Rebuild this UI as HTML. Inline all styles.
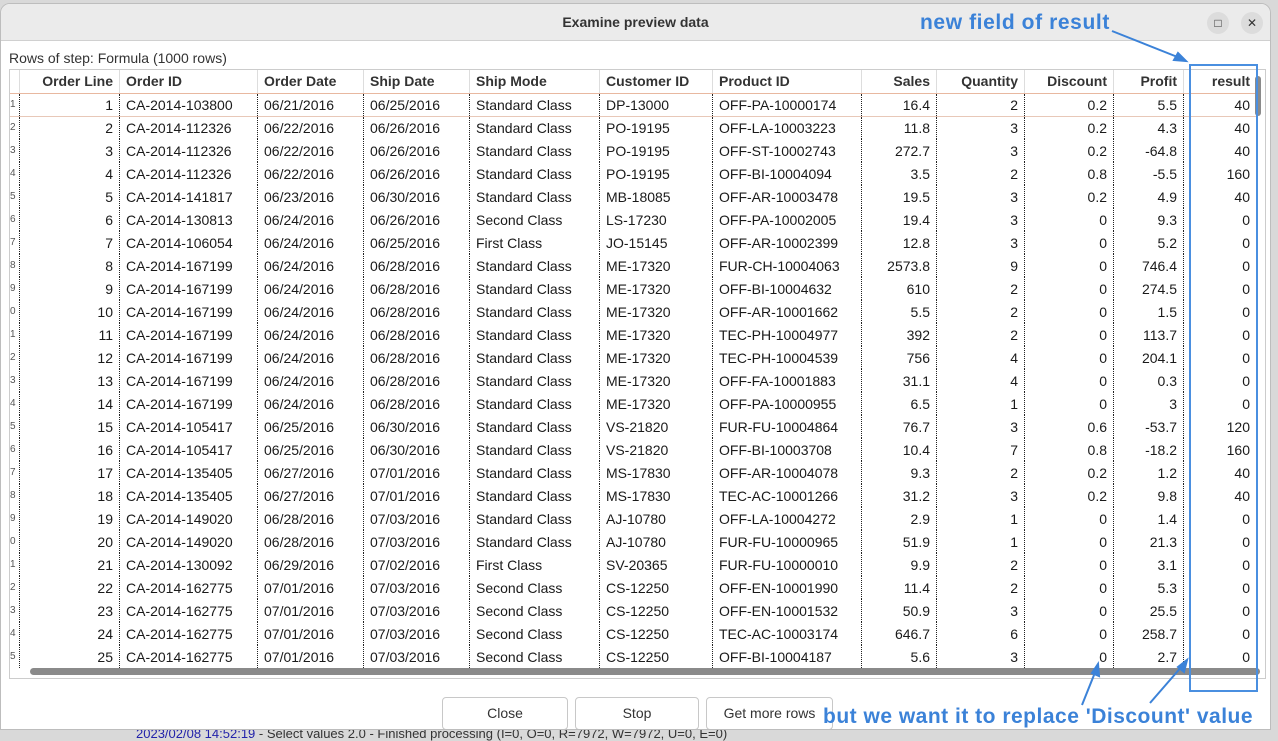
<!DOCTYPE html>
<html><head><meta charset="utf-8"><style>
*{margin:0;padding:0;box-sizing:border-box}
body{width:1278px;height:739px;overflow:hidden;background:#d9d9d9;font-family:"Liberation Sans",sans-serif;position:relative}
.dlg{position:absolute;left:0;top:3px;width:1271px;height:727px;background:#fff;border-radius:10px 10px 0 0;border:1px solid #bdbdbd;overflow:hidden}
.tb{height:37px;background:#ebebeb;border-bottom:1px solid #d0d0d0;text-align:center;font-weight:bold;font-size:14px;line-height:37px;color:#333}
.wb{position:absolute;top:8px;width:22px;height:22px;border-radius:50%;background:#dcdcdc;font-size:12px;text-align:center;line-height:22px;color:#333}
.lbl{position:absolute;left:8px;top:46px;font-size:14px;color:#333}
.grid{position:absolute;left:8px;top:65px;width:1257px;height:610px;border:1px solid #ccc;overflow:hidden}
table{border-collapse:collapse;table-layout:fixed;font-size:14px;color:#1a1a1a;position:absolute;left:-3px;top:0}
td,th{height:23px;padding:0 6px;white-space:nowrap;overflow:hidden;border-right:1px dotted #222}
th{height:23px;font-weight:bold;border-right:1px solid #ddd;border-bottom:1px solid #e8b8a0;color:#333}
td.r,th.r{text-align:right}td.l,th.l{text-align:left}
tr.f td{border-bottom:1px solid #e8c8b8}
td:first-child{padding:0 0 0 3px;color:#555;font-size:10px}
.hs{position:absolute;left:20px;top:598px;width:1230px;height:7px;background:#8a8a8a;border-radius:4px}
.vs{position:absolute;right:4px;top:6px;width:6px;height:40px;background:#8a8a8a;border-radius:3px}
.btn{position:absolute;top:693px;height:33px;border:1px solid #c8c8c8;border-radius:4px;background:#fff;font-size:14px;text-align:center;line-height:31px;color:#333}
.note{position:absolute;color:#3b82d8;font-weight:bold;font-size:21px;white-space:nowrap}
.box{position:absolute;left:1189px;top:64px;width:69px;height:628px;border:2px solid #4a8fe0}
.log{position:absolute;left:136px;top:726px;font-size:13px;color:#333}
</style></head><body>
<div class="log"><span style="color:#2222aa">2023/02/08 14:52:19</span> - Select values 2.0 - Finished processing (I=0, O=0, R=7972, W=7972, U=0, E=0)</div>
<div class="dlg">
<div class="tb">Examine preview data</div>
<div class="wb" style="left:1206px">□</div>
<div class="wb" style="left:1240px">✕</div>
<div class="lbl">Rows of step: Formula (1000 rows)</div>
<div class="grid">
<table>
<colgroup><col style="width:10px"><col style="width:100px"><col style="width:138px"><col style="width:106px"><col style="width:106px"><col style="width:130px"><col style="width:113px"><col style="width:149px"><col style="width:75px"><col style="width:88px"><col style="width:89px"><col style="width:70px"><col style="width:73px"></colgroup>
<tr><th></th><th class="r">Order Line</th><th class="l">Order ID</th><th class="l">Order Date</th><th class="l">Ship Date</th><th class="l">Ship Mode</th><th class="l">Customer ID</th><th class="l">Product ID</th><th class="r">Sales</th><th class="r">Quantity</th><th class="r">Discount</th><th class="r">Profit</th><th class="r">result</th></tr>
<tr class="f"><td>1</td><td class="r">1</td><td>CA-2014-103800</td><td>06/21/2016</td><td>06/25/2016</td><td>Standard Class</td><td>DP-13000</td><td>OFF-PA-10000174</td><td class="r">16.4</td><td class="r">2</td><td class="r">0.2</td><td class="r">5.5</td><td class="r">40</td></tr>
<tr><td>2</td><td class="r">2</td><td>CA-2014-112326</td><td>06/22/2016</td><td>06/26/2016</td><td>Standard Class</td><td>PO-19195</td><td>OFF-LA-10003223</td><td class="r">11.8</td><td class="r">3</td><td class="r">0.2</td><td class="r">4.3</td><td class="r">40</td></tr>
<tr><td>3</td><td class="r">3</td><td>CA-2014-112326</td><td>06/22/2016</td><td>06/26/2016</td><td>Standard Class</td><td>PO-19195</td><td>OFF-ST-10002743</td><td class="r">272.7</td><td class="r">3</td><td class="r">0.2</td><td class="r">-64.8</td><td class="r">40</td></tr>
<tr><td>4</td><td class="r">4</td><td>CA-2014-112326</td><td>06/22/2016</td><td>06/26/2016</td><td>Standard Class</td><td>PO-19195</td><td>OFF-BI-10004094</td><td class="r">3.5</td><td class="r">2</td><td class="r">0.8</td><td class="r">-5.5</td><td class="r">160</td></tr>
<tr><td>5</td><td class="r">5</td><td>CA-2014-141817</td><td>06/23/2016</td><td>06/30/2016</td><td>Standard Class</td><td>MB-18085</td><td>OFF-AR-10003478</td><td class="r">19.5</td><td class="r">3</td><td class="r">0.2</td><td class="r">4.9</td><td class="r">40</td></tr>
<tr><td>6</td><td class="r">6</td><td>CA-2014-130813</td><td>06/24/2016</td><td>06/26/2016</td><td>Second Class</td><td>LS-17230</td><td>OFF-PA-10002005</td><td class="r">19.4</td><td class="r">3</td><td class="r">0</td><td class="r">9.3</td><td class="r">0</td></tr>
<tr><td>7</td><td class="r">7</td><td>CA-2014-106054</td><td>06/24/2016</td><td>06/25/2016</td><td>First Class</td><td>JO-15145</td><td>OFF-AR-10002399</td><td class="r">12.8</td><td class="r">3</td><td class="r">0</td><td class="r">5.2</td><td class="r">0</td></tr>
<tr><td>8</td><td class="r">8</td><td>CA-2014-167199</td><td>06/24/2016</td><td>06/28/2016</td><td>Standard Class</td><td>ME-17320</td><td>FUR-CH-10004063</td><td class="r">2573.8</td><td class="r">9</td><td class="r">0</td><td class="r">746.4</td><td class="r">0</td></tr>
<tr><td>9</td><td class="r">9</td><td>CA-2014-167199</td><td>06/24/2016</td><td>06/28/2016</td><td>Standard Class</td><td>ME-17320</td><td>OFF-BI-10004632</td><td class="r">610</td><td class="r">2</td><td class="r">0</td><td class="r">274.5</td><td class="r">0</td></tr>
<tr><td>0</td><td class="r">10</td><td>CA-2014-167199</td><td>06/24/2016</td><td>06/28/2016</td><td>Standard Class</td><td>ME-17320</td><td>OFF-AR-10001662</td><td class="r">5.5</td><td class="r">2</td><td class="r">0</td><td class="r">1.5</td><td class="r">0</td></tr>
<tr><td>1</td><td class="r">11</td><td>CA-2014-167199</td><td>06/24/2016</td><td>06/28/2016</td><td>Standard Class</td><td>ME-17320</td><td>TEC-PH-10004977</td><td class="r">392</td><td class="r">2</td><td class="r">0</td><td class="r">113.7</td><td class="r">0</td></tr>
<tr><td>2</td><td class="r">12</td><td>CA-2014-167199</td><td>06/24/2016</td><td>06/28/2016</td><td>Standard Class</td><td>ME-17320</td><td>TEC-PH-10004539</td><td class="r">756</td><td class="r">4</td><td class="r">0</td><td class="r">204.1</td><td class="r">0</td></tr>
<tr><td>3</td><td class="r">13</td><td>CA-2014-167199</td><td>06/24/2016</td><td>06/28/2016</td><td>Standard Class</td><td>ME-17320</td><td>OFF-FA-10001883</td><td class="r">31.1</td><td class="r">4</td><td class="r">0</td><td class="r">0.3</td><td class="r">0</td></tr>
<tr><td>4</td><td class="r">14</td><td>CA-2014-167199</td><td>06/24/2016</td><td>06/28/2016</td><td>Standard Class</td><td>ME-17320</td><td>OFF-PA-10000955</td><td class="r">6.5</td><td class="r">1</td><td class="r">0</td><td class="r">3</td><td class="r">0</td></tr>
<tr><td>5</td><td class="r">15</td><td>CA-2014-105417</td><td>06/25/2016</td><td>06/30/2016</td><td>Standard Class</td><td>VS-21820</td><td>FUR-FU-10004864</td><td class="r">76.7</td><td class="r">3</td><td class="r">0.6</td><td class="r">-53.7</td><td class="r">120</td></tr>
<tr><td>6</td><td class="r">16</td><td>CA-2014-105417</td><td>06/25/2016</td><td>06/30/2016</td><td>Standard Class</td><td>VS-21820</td><td>OFF-BI-10003708</td><td class="r">10.4</td><td class="r">7</td><td class="r">0.8</td><td class="r">-18.2</td><td class="r">160</td></tr>
<tr><td>7</td><td class="r">17</td><td>CA-2014-135405</td><td>06/27/2016</td><td>07/01/2016</td><td>Standard Class</td><td>MS-17830</td><td>OFF-AR-10004078</td><td class="r">9.3</td><td class="r">2</td><td class="r">0.2</td><td class="r">1.2</td><td class="r">40</td></tr>
<tr><td>8</td><td class="r">18</td><td>CA-2014-135405</td><td>06/27/2016</td><td>07/01/2016</td><td>Standard Class</td><td>MS-17830</td><td>TEC-AC-10001266</td><td class="r">31.2</td><td class="r">3</td><td class="r">0.2</td><td class="r">9.8</td><td class="r">40</td></tr>
<tr><td>9</td><td class="r">19</td><td>CA-2014-149020</td><td>06/28/2016</td><td>07/03/2016</td><td>Standard Class</td><td>AJ-10780</td><td>OFF-LA-10004272</td><td class="r">2.9</td><td class="r">1</td><td class="r">0</td><td class="r">1.4</td><td class="r">0</td></tr>
<tr><td>0</td><td class="r">20</td><td>CA-2014-149020</td><td>06/28/2016</td><td>07/03/2016</td><td>Standard Class</td><td>AJ-10780</td><td>FUR-FU-10000965</td><td class="r">51.9</td><td class="r">1</td><td class="r">0</td><td class="r">21.3</td><td class="r">0</td></tr>
<tr><td>1</td><td class="r">21</td><td>CA-2014-130092</td><td>06/29/2016</td><td>07/02/2016</td><td>First Class</td><td>SV-20365</td><td>FUR-FU-10000010</td><td class="r">9.9</td><td class="r">2</td><td class="r">0</td><td class="r">3.1</td><td class="r">0</td></tr>
<tr><td>2</td><td class="r">22</td><td>CA-2014-162775</td><td>07/01/2016</td><td>07/03/2016</td><td>Second Class</td><td>CS-12250</td><td>OFF-EN-10001990</td><td class="r">11.4</td><td class="r">2</td><td class="r">0</td><td class="r">5.3</td><td class="r">0</td></tr>
<tr><td>3</td><td class="r">23</td><td>CA-2014-162775</td><td>07/01/2016</td><td>07/03/2016</td><td>Second Class</td><td>CS-12250</td><td>OFF-EN-10001532</td><td class="r">50.9</td><td class="r">3</td><td class="r">0</td><td class="r">25.5</td><td class="r">0</td></tr>
<tr><td>4</td><td class="r">24</td><td>CA-2014-162775</td><td>07/01/2016</td><td>07/03/2016</td><td>Second Class</td><td>CS-12250</td><td>TEC-AC-10003174</td><td class="r">646.7</td><td class="r">6</td><td class="r">0</td><td class="r">258.7</td><td class="r">0</td></tr>
<tr><td>5</td><td class="r">25</td><td>CA-2014-162775</td><td>07/01/2016</td><td>07/03/2016</td><td>Second Class</td><td>CS-12250</td><td>OFF-BI-10004187</td><td class="r">5.6</td><td class="r">3</td><td class="r">0</td><td class="r">2.7</td><td class="r">0</td></tr>
</table>
<div class="vs"></div>
<div class="hs"></div>
</div>
<div class="btn" style="left:441px;width:126px">Close</div>
<div class="btn" style="left:574px;width:124px">Stop</div>
<div class="btn" style="left:705px;width:127px">Get more rows</div>
</div>
<div class="box"></div>
<div class="note" style="left:920px;top:11px;letter-spacing:0.6px">new field of result</div>
<div class="note" style="left:823px;top:705px;letter-spacing:0.5px">but we want it to replace 'Discount' value</div>
<svg style="position:absolute;left:0;top:0" width="1278" height="739">
<g stroke="#3b82d8" stroke-width="2" fill="#3b82d8">
<line x1="1112" y1="31" x2="1180" y2="58"/><polygon points="1186,61 1174,60 1178,53"/>
<line x1="1082" y1="705" x2="1096" y2="670"/><polygon points="1098,664 1099,676 1092,673"/>
<line x1="1150" y1="703" x2="1183" y2="665"/><polygon points="1187,660 1184,672 1178,667"/>
</g></svg>
</body></html>
